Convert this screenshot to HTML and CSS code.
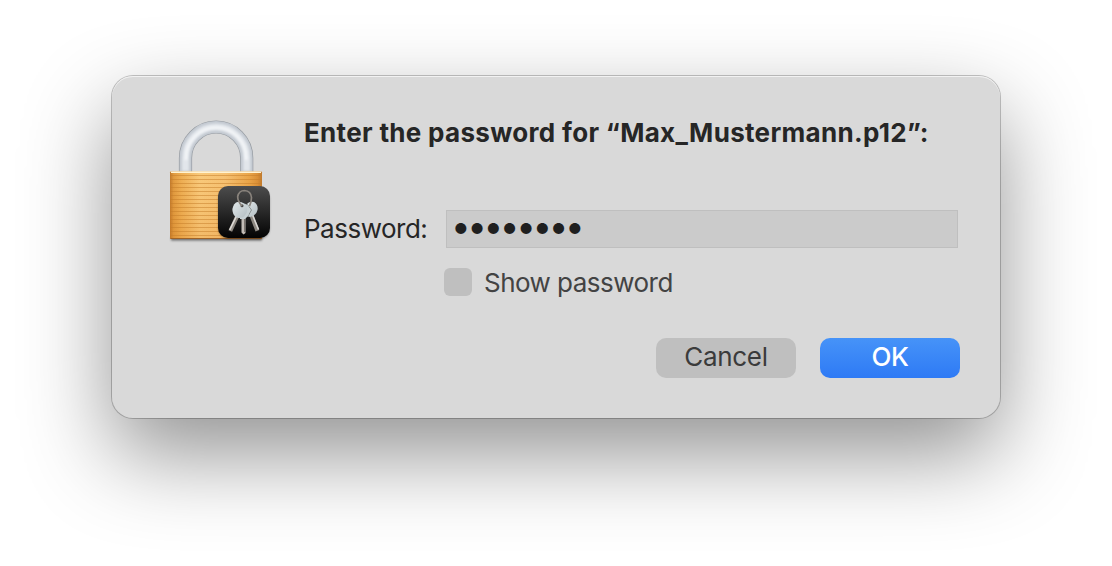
FILE: index.html
```html
<!DOCTYPE html>
<html lang="en">
<head>
  <meta charset="UTF-8" />
  <title>Enter password</title>
  <link rel="stylesheet" href="styles.css">
</head>
<body>
  <form class="dialog">
    <svg class="lock" viewBox="162 114 116 132" aria-hidden="true">
      <defs>
        <linearGradient id="brass" x1="0" x2="1" y1="0" y2="0">
          <stop offset="0" stop-color="#bd762b" />
          <stop offset=".04" stop-color="#e09b42" />
          <stop offset=".12" stop-color="#eeb056" />
          <stop offset=".32" stop-color="#fbcf83" />
          <stop offset=".6" stop-color="#f8c679" />
          <stop offset=".86" stop-color="#eaa64b" />
          <stop offset=".95" stop-color="#d98f38" />
          <stop offset="1" stop-color="#bb762c" />
        </linearGradient>
        <linearGradient id="brassShade" x1="0" x2="0" y1="0" y2="1">
          <stop offset="0" stop-color="#e89a35" stop-opacity=".1" />
          <stop offset="1" stop-color="#d87d1a" stop-opacity=".24" />
        </linearGradient>
        <pattern id="lines" x="170" y="174" width="8" height="4" patternUnits="userSpaceOnUse">
          <path d="M0 1.500H8" stroke="#c47b27" stroke-opacity=".5" stroke-width="1" />
        </pattern>
        <linearGradient id="badge" x1="0" x2="0" y1="0" y2="1">
          <stop offset="0" stop-color="#4d4d4d" />
          <stop offset="1" stop-color="#030303" />
        </linearGradient>
        <linearGradient id="keySteel" x1="0" x2="1" y1="0" y2="1">
          <stop offset="0" stop-color="#e3e9eb" />
          <stop offset="1" stop-color="#b2bdc1" />
        </linearGradient>
        <filter id="soft" x="-20%" y="-200%" width="140%" height="500%">
          <feGaussianBlur stdDeviation="1" />
        </filter>
        <filter id="shine">
          <feGaussianBlur stdDeviation="1" />
        </filter>
      </defs>

      <!-- shackle -->
      <g fill="none">
        <path d="M185.500 172V158A30.600 31 0 0 1 246.700 158V172" stroke="#979ca2" stroke-width="13.200" />
        <path d="M185.500 172V158A30.600 31 0 0 1 246.700 158V172" stroke="#c3c9d1" stroke-width="11.800" />
        <path d="M185.500 171V158A30.600 31 0 0 1 246.700 158V171" stroke="#e2e6eb" stroke-width="7" filter="url(#shine)" />
        <path d="M186 160V158A30.100 30.500 0 0 1 246.200 158V160" stroke="#f5f7f9" stroke-width="2.500" filter="url(#shine)" />
      </g>

      <!-- body -->
      <rect x="171" y="237" width="91" height="3.500" fill="#000" opacity=".5" filter="url(#soft)" />
      <rect x="170" y="171.500" width="92" height="67.500" rx="1" fill="url(#brass)" />
      <rect x="170" y="171.500" width="92" height="67.500" rx="1" fill="url(#brassShade)" />
      <rect x="170" y="174" width="92" height="63" fill="url(#lines)" />
      <path d="M171 172.200H261" stroke="#fff3d2" stroke-width="1.500" />
      <path d="M170.500 238.500H261.500" stroke="#9f6225" stroke-width="1" />

      <!-- keychain badge -->
      <rect x="218.500" y="188" width="51" height="51" rx="10" fill="#000" opacity=".4" filter="url(#soft)" />
      <rect x="218" y="186" width="52" height="52" rx="10" fill="url(#badge)" />
      <path d="M249 209L257.400 230.800" stroke="#8d8881" stroke-width="4" />
      <path d="M250.500 210L258.500 229.500" stroke="#d9d7d4" stroke-width="1.600" />
      <path d="M246 206Q248 201 254 202Q258.500 205 257.500 210Q256.500 215.500 250 217L246 216Q244 210 246 206Z" fill="url(#keySteel)" />
      <path d="M247 204L251.500 210L247.500 217" fill="none" stroke="#78807f" stroke-width=".8" />
      <path d="M241.500 214H245.500V233L243.500 234.500L241.500 232.500Z" fill="#c2bdb7" />
      <path d="M244.500 216V232" stroke="#7c7670" stroke-width="1" />
      <path d="M240 204Q247 202 249.500 209Q250 215 245 219H240Z" fill="#c6d0d3" />
      <path d="M237.800 215L230.300 231" stroke="#8f8a83" stroke-width="4" />
      <path d="M237 215L229.700 230" stroke="#dedbd7" stroke-width="1.700" />
      <path d="M236 202.500Q240 200.500 244 203.500Q248 207 246.700 212.500Q244 218.500 238.500 218Q233.500 217 232.500 211Q232 206 236 202.500Z" fill="url(#keySteel)" />
      <circle cx="242" cy="205.700" r="1.500" fill="#454545" />
      <path d="M242 206Q237.500 201 237.700 196.500Q239 190.500 244.500 190.500Q251 191 251.500 197.500Q251.500 202 249.500 206" fill="none" stroke="#89837c" stroke-width="1.700" />
    </svg>

    <div class="content">
      <h1 class="title">Enter the password for “Max_Mustermann.p12”:</h1>
      <div class="field">
        <label class="label" for="password">Password:</label>
        <input class="input" type="password" id="password" value="password">
      </div>
      <label class="show">
        <input class="checkbox" type="checkbox">
        Show password
      </label>
      <div class="buttons">
        <button class="button" type="button">Cancel</button>
        <button class="button primary" type="submit">OK</button>
      </div>
    </div>
  </form>
</body>
</html>
```
FILE: styles.css
```css
* { box-sizing: border-box; }
body {
  margin: 0; padding: 76px 112px; height: 566px; overflow: hidden;
  background: #fff; color: #262626; font-family: Inter, sans-serif; font-size: 26px; line-height: 32px;
}
.dialog {
  display: flex; gap: 26px; width: 888px; height: 342px; padding: 38px 40px 40px 50px;
  background: #d9d9d9; border-radius: 21px;
  box-shadow: inset 0 1px 0 #f2f2f2, 0 0 0 1px rgba(0, 0, 0, .22), 0 36px 88px rgba(0, 0, 0, .43);
}
.lock { flex: none; width: 116px; height: 132px; }
.content { flex: 1; display: flex; flex-direction: column; min-width: 0; }
.title { margin: 3px 0 0; font-size: 26px; line-height: 32px; font-weight: 700; white-space: nowrap; letter-spacing: .32px; }
.field { display: flex; align-items: center; height: 38px; margin-top: 61px; margin-right: 2px; }
.label { width: 142px; letter-spacing: -.5px; }
.input {
  flex: 1; min-width: 0; height: 38px; padding: 0 4px 6px; border: 1px solid #bfbfbf; border-radius: 0;
  outline: none; background: #cbcbcb; color: #1f1f1f; font: 35px/30px Inter, sans-serif; letter-spacing: -3.4px;
}
.show {
  display: flex; align-items: center; gap: 12px; height: 28px; margin: 20px 0 0 140px;
  padding-top: 1px; color: #434343; letter-spacing: -.53px;
}
.checkbox { appearance: none; width: 28px; height: 28px; margin: -1px 0 0; border-radius: 6px; background: #bfbfbf; }
.buttons { display: flex; justify-content: flex-end; gap: 24px; margin-top: 42px; }
.button {
  width: 140px; height: 40px; padding: 0 0 2px; border: none; border-radius: 10px;
  background: #bfbfbf; color: #3b3b3b; font: 26px/38px Inter, sans-serif; letter-spacing: -.3px;
}
.primary { background: linear-gradient(#4693f8, #2e7af5); color: #fff; font-weight: 500; }
```
